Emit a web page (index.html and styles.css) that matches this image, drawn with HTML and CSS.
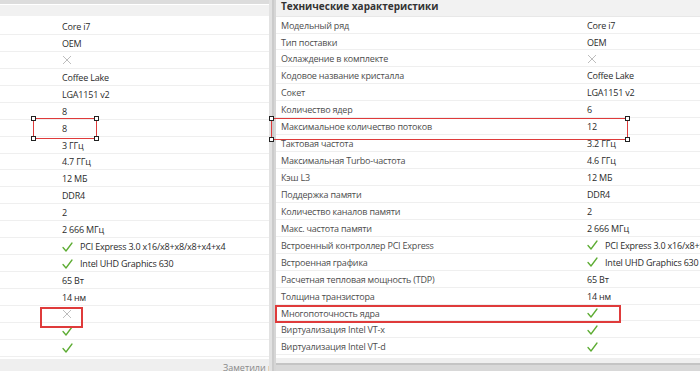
FILE: index.html
```html
<!DOCTYPE html>
<html lang="ru">
<head>
<meta charset="utf-8">
<title>Технические характеристики</title>
<link rel="stylesheet" href="styles.css">
</head>
<body>
<div class="shot">
  <section class="panel panel-left">
    <div class="topbar"></div>
    <div class="head-left"></div>
    <ul class="rows">
      <li class="row"><span class="val">Core i7</span></li>
      <li class="row"><span class="val">OEM</span></li>
      <li class="row"><span class="val"><svg class="cross" viewBox="0 0 10 10"><path d="M1 1L9 9M9 1L1 9"/></svg></span></li>
      <li class="row"><span class="val">Coffee Lake</span></li>
      <li class="row"><span class="val">LGA1151 v2</span></li>
      <li class="row"><span class="val">8</span></li>
      <li class="row"><span class="val">8</span></li>
      <li class="row"><span class="val">3 ГГц</span></li>
      <li class="row"><span class="val">4.7 ГГц</span></li>
      <li class="row"><span class="val">12 МБ</span></li>
      <li class="row"><span class="val">DDR4</span></li>
      <li class="row"><span class="val">2</span></li>
      <li class="row"><span class="val">2 666 МГц</span></li>
      <li class="row"><span class="val"><svg class="check" viewBox="0 0 11 10"><path d="M1 5.5L4 9L10 1"/></svg>PCI Express 3.0 x16/x8+x8/x8+x4+x4</span></li>
      <li class="row"><span class="val"><svg class="check" viewBox="0 0 11 10"><path d="M1 5.5L4 9L10 1"/></svg>Intel UHD Graphics 630</span></li>
      <li class="row"><span class="val">65 Вт</span></li>
      <li class="row"><span class="val">14 нм</span></li>
      <li class="row"><span class="val"><svg class="cross" viewBox="0 0 10 10"><path d="M1 1L9 9M9 1L1 9"/></svg></span></li>
      <li class="row"><span class="val"><svg class="check" viewBox="0 0 11 10"><path d="M1 5.5L4 9L10 1"/></svg></span></li>
      <li class="row"><span class="val"><svg class="check" viewBox="0 0 11 10"><path d="M1 5.5L4 9L10 1"/></svg></span></li>
    </ul>
    <div class="foot-left"><span>Заметили неточность в описании?</span></div>
  </section>

  <div class="divider"></div>

  <section class="panel panel-right">
    <div class="head-right">Технические характеристики</div>
    <ul class="rows">
      <li class="row grid"><span class="lbl">Модельный ряд</span><span class="val">Core i7</span></li>
      <li class="row grid"><span class="lbl">Тип поставки</span><span class="val">OEM</span></li>
      <li class="row grid"><span class="lbl">Охлаждение в комплекте</span><span class="val"><svg class="cross" viewBox="0 0 10 10"><path d="M1 1L9 9M9 1L1 9"/></svg></span></li>
      <li class="row grid"><span class="lbl">Кодовое название кристалла</span><span class="val">Coffee Lake</span></li>
      <li class="row grid"><span class="lbl">Сокет</span><span class="val">LGA1151 v2</span></li>
      <li class="row grid"><span class="lbl">Количество ядер</span><span class="val">6</span></li>
      <li class="row grid"><span class="lbl">Максимальное количество потоков</span><span class="val">12</span></li>
      <li class="row grid"><span class="lbl">Тактовая частота</span><span class="val">3.2 ГГц</span></li>
      <li class="row grid"><span class="lbl">Максимальная Turbo-частота</span><span class="val">4.6 ГГц</span></li>
      <li class="row grid"><span class="lbl">Кэш L3</span><span class="val">12 МБ</span></li>
      <li class="row grid"><span class="lbl">Поддержка памяти</span><span class="val">DDR4</span></li>
      <li class="row grid"><span class="lbl">Количество каналов памяти</span><span class="val">2</span></li>
      <li class="row grid"><span class="lbl">Макс. частота памяти</span><span class="val">2 666 МГц</span></li>
      <li class="row grid"><span class="lbl">Встроенный контроллер PCI Express</span><span class="val"><svg class="check" viewBox="0 0 11 10"><path d="M1 5.5L4 9L10 1"/></svg>PCI Express 3.0 x16/x8+x8/x8+x4+x4</span></li>
      <li class="row grid"><span class="lbl">Встроенная графика</span><span class="val"><svg class="check" viewBox="0 0 11 10"><path d="M1 5.5L4 9L10 1"/></svg>Intel UHD Graphics 630</span></li>
      <li class="row grid"><span class="lbl">Расчетная тепловая мощность (TDP)</span><span class="val">65 Вт</span></li>
      <li class="row grid"><span class="lbl">Толщина транзистора</span><span class="val">14 нм</span></li>
      <li class="row grid"><span class="lbl">Многопоточность ядра</span><span class="val"><svg class="check" viewBox="0 0 11 10"><path d="M1 5.5L4 9L10 1"/></svg></span></li>
      <li class="row grid"><span class="lbl">Виртуализация Intel VT-x</span><span class="val"><svg class="check" viewBox="0 0 11 10"><path d="M1 5.5L4 9L10 1"/></svg></span></li>
      <li class="row grid"><span class="lbl">Виртуализация Intel VT-d</span><span class="val"><svg class="check" viewBox="0 0 11 10"><path d="M1 5.5L4 9L10 1"/></svg></span></li>
    </ul>
    <div class="foot-right"></div>
  </section>

  <div class="mark mark-a"><i class="h tl"></i><i class="h tr"></i><i class="h bl"></i><i class="h br"></i></div>
  <div class="mark mark-b"></div>
  <div class="mark mark-c"><i class="h tl"></i><i class="h tr"></i><i class="h bl"></i><i class="h br"></i></div>
  <div class="mark mark-d"></div>
</div>
</body>
</html>
```

FILE: styles.css
```css
* { box-sizing: border-box; }
html, body { margin: 0; padding: 0; background: #fff; }
body {
  font-family: "Open Sans", "Noto Sans", sans-serif;
  font-size: 9px;
  letter-spacing: -0.2px;
  color: #2b2b2b;
}
.shot {
  position: relative;
  width: 700px;
  height: 371px;
  overflow: hidden;
  display: flex;
}
.panel { display: flex; flex-direction: column; overflow: hidden; background: #fff; }
.panel-left { width: 269px; flex: none; }
.panel-right { flex: 1; min-width: 0; }
.divider {
  width: 7px;
  flex: none;
  background: linear-gradient(to right, #e2e2e2 0 3px, #cbcbcb 3px 5px, #d6d6d6 5px);
}
.topbar { height: 5px; background: #dcdcdc; border-bottom: 1px solid #fff; }
.head-left { height: 11px; background: #f1f1f1; margin-bottom: 2px; }
.rows { list-style: none; margin: 0; padding: 0; }
.row {
  height: 16.95px;
  border-bottom: 1px solid #efefef;
  display: flex;
  align-items: center;
  white-space: nowrap;
  padding-top: 1px;
}
.panel-left .val { padding-left: 62px; }
.val { display: flex; align-items: center; color: #2b2b2b; }
.grid { display: grid; grid-template-columns: 311px 1fr; align-items: center; }
.lbl { padding-left: 5px; color: #4d4d4d; }
.head-right {
  height: 16.6px;
  background: #f2f2f2;
  font-size: 10px;
  letter-spacing: 0;
  font-weight: 700;
  color: #333;
  padding-left: 5px;
  line-height: 12px;
  border-bottom: 1px solid #e8e8e8;
}
.check { width: 11px; height: 10px; margin-right: 7px; flex: none; }
.check path { fill: none; stroke: #5dac33; stroke-width: 1.3; stroke-linecap: round; stroke-linejoin: round; }
.cross { width: 10px; height: 10px; flex: none; }
.cross path { fill: none; stroke: #bdbdbd; stroke-width: 1; }
.foot-left {
  margin-top: 2px;
  flex: 1;
  background: #efefef;
  padding-left: 223px;
  font-size: 9px;
  letter-spacing: 0;
  color: #8a8a8a;
  white-space: nowrap;
  overflow: hidden;
  line-height: 18px;
}
.foot-right {
  margin-top: 3px;
  flex: 1;
  background: linear-gradient(to bottom, #efefef 0 5px, #c4c4c4 5px 7px, #d8d8d8 7px);
}
.mark { position: absolute; border: 2px solid #df3b3b; }
.mark-a { left: 33px; top: 118px; width: 64px; height: 21px; border-width: 1.5px; }
.mark-b { left: 40px; top: 307px; width: 43px; height: 21px; }
.mark-c { left: 271px; top: 118px; width: 357px; height: 22px; border-width: 1.5px; }
.mark-d { left: 275px; top: 305px; width: 346px; height: 18px; }
.h {
  position: absolute;
  width: 5px;
  height: 5px;
  background: #fff;
  border: 1px solid #222;
}
.tl { left: -3px; top: -3px; }
.tr { right: -3px; top: -3px; }
.bl { left: -3px; bottom: -3px; }
.br { right: -3px; bottom: -3px; }
```
